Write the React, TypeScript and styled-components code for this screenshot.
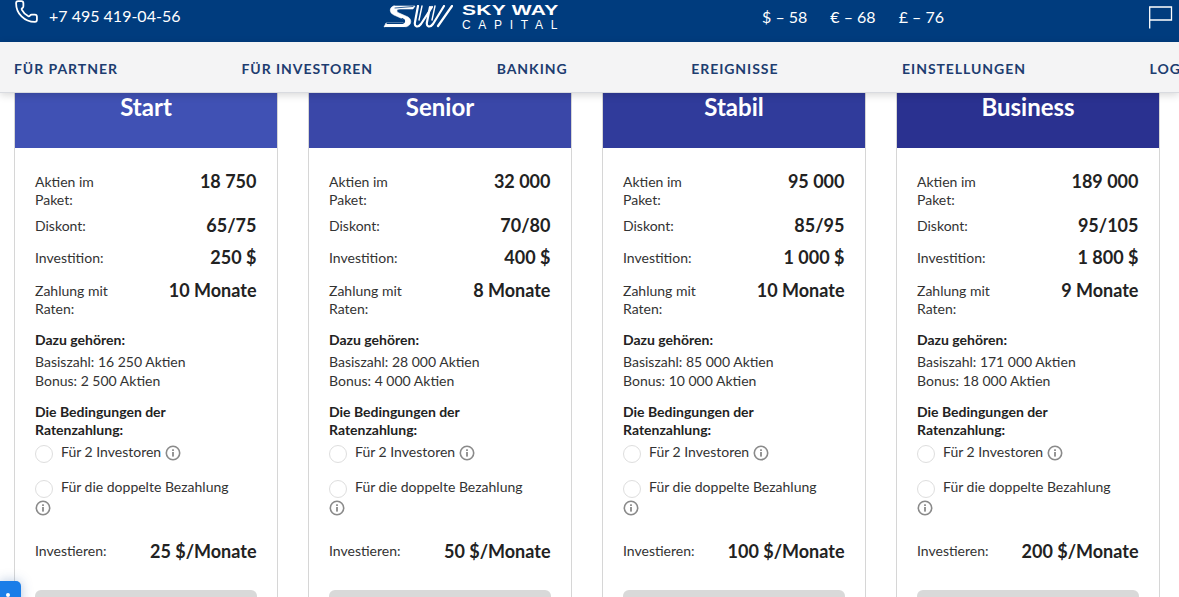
import styled, { createGlobalStyle } from "styled-components";
import { Phone } from "lucide-react";

interface Plan {
  title: string;
  headColor: string;
  shares: string;
  discount: string;
  investment: string;
  months: string;
  base: string;
  bonus: string;
  monthly: string;
}

const plans: Plan[] = [
  { title: "Start", headColor: "#4051b4", shares: "18 750", discount: "65/75", investment: "250 $", months: "10 Monate", base: "16 250", bonus: "2 500", monthly: "25 $/Monate" },
  { title: "Senior", headColor: "#3a47a8", shares: "32 000", discount: "70/80", investment: "400 $", months: "8 Monate", base: "28 000", bonus: "4 000", monthly: "50 $/Monate" },
  { title: "Stabil", headColor: "#303b9b", shares: "95 000", discount: "85/95", investment: "1 000 $", months: "10 Monate", base: "85 000", bonus: "10 000", monthly: "100 $/Monate" },
  { title: "Business", headColor: "#2a3190", shares: "189 000", discount: "95/105", investment: "1 800 $", months: "9 Monate", base: "171 000", bonus: "18 000", monthly: "200 $/Monate" },
];

const navItems = ["FÜR PARTNER", "FÜR INVESTOREN", "BANKING", "EREIGNISSE", "EINSTELLUNGEN", "LOGOUT"];

const GlobalStyle = createGlobalStyle`
  html, body {
    margin: 0;
    padding: 0;
    background: #fff;
    font-family: Lato, "Open Sans", sans-serif;
  }
  * {
    box-sizing: border-box;
  }
`;

const Page = styled.div`
  position: relative;
  width: 1179px;
  height: 597px;
  overflow: hidden;
`;

const TopBar = styled.header`
  display: flex;
  align-items: flex-start;
  height: 42px;
  background: #003c7e;
  color: #fff;
`;

const PhoneBox = styled.div`
  display: flex;
  align-items: center;
  gap: 10px;
  flex: none;
  width: 383px;
  height: 30px;
  padding-left: 14px;
  font-size: 16px;
`;

const PhoneIcon = styled.span`
  display: flex;
  margin-top: -8px;
`;

const Logo = styled.div`
  display: flex;
  align-items: flex-start;
  gap: 9px;
  flex: none;
  width: 379px;
  padding-top: 5px;
`;

const LogoText = styled.div`
  display: flex;
  flex-direction: column;
  gap: 4px;
  font-family: "Liberation Sans", sans-serif;
  color: #fff;
`;

const LogoTop = styled.span`
  font-size: 14px;
  font-weight: 700;
  line-height: 11px;
  letter-spacing: 0.2px;
  white-space: nowrap;
  transform: scaleX(1.5);
  transform-origin: left;
`;

const LogoBottom = styled.span`
  font-size: 12px;
  line-height: 10px;
  letter-spacing: 7.7px;
  white-space: nowrap;
`;

const Rates = styled.div`
  display: flex;
  gap: 23px;
  flex: none;
  width: 387px;
  height: 32px;
  align-items: center;
  font-size: 16px;
`;

const FlagIcon = styled.svg`
  width: 24px;
  height: 24px;
  margin-top: 6px;
  flex: none;
`;

const Nav = styled.nav`
  position: relative;
  z-index: 2;
  display: flex;
  gap: 123.6px;
  align-items: center;
  height: 51px;
  padding: 2px 0 0 14px;
  background: #f4f4f5;
  border-bottom: 1px solid #d9dbe0;
  box-shadow: 0 2px 8px rgba(0, 0, 0, 0.16);
  white-space: nowrap;
`;

const NavLink = styled.a`
  font-size: 14px;
  font-weight: 700;
  letter-spacing: 0.95px;
  color: #1d3d70;
`;

const Cards = styled.main`
  display: flex;
  gap: 30px;
  padding: 0 14px;
`;

const Card = styled.section`
  flex: none;
  width: 264px;
  height: 560px;
  border: 1px solid #d6d6d6;
  border-top: 0;
`;

const CardHead = styled.div<{ $color: string }>`
  height: 55px;
  background: ${(p) => p.$color};
  color: #fff;
  font-size: 24px;
  font-weight: 700;
  line-height: 27px;
  text-align: center;
`;

const CardBody = styled.div`
  padding: 24px 20px 0;
  color: #333;
  font-size: 14px;
  line-height: 18px;
`;

const Row = styled.div<{ $gap: number }>`
  display: flex;
  justify-content: space-between;
  align-items: flex-start;
  padding-right: 0.5px;
  margin-bottom: ${(p) => p.$gap}px;
`;

const Label = styled.div`
  width: 90px;
  padding-top: 1px;
`;

const Value = styled.div`
  color: #222;
  font-size: 18px;
  font-weight: 700;
  line-height: 18px;
  white-space: nowrap;
`;

const Heading = styled.div`
  color: #222;
  font-weight: 700;
`;

const IncludedBlock = styled.div`
  margin-top: 13px;
`;

const IncludedLine = styled.div`
  margin-top: 1px;
  &:nth-child(2) {
    margin-top: 4px;
  }
`;

const Terms = styled.div`
  margin-top: 13px;
  width: 190px;
`;

const Option = styled.label<{ $gap: number }>`
  display: block;
  width: 222px;
  margin-top: ${(p) => p.$gap}px;
`;

const Radio = styled.span`
  display: inline-block;
  width: 18px;
  height: 18px;
  margin-right: 8px;
  border: 1px solid #dedede;
  border-radius: 50%;
  vertical-align: -6px;
`;

const InfoIcon = styled.svg`
  display: inline-block;
  width: 16px;
  height: 16px;
  margin-left: 4px;
  vertical-align: -4px;
`;

const InfoBlock = styled(InfoIcon)`
  display: block;
  margin: 2px 0 0;
`;

const InvestRow = styled(Row)`
  align-items: center;
  margin-top: 25px;
`;

const BuyButton = styled.button`
  display: block;
  width: 222px;
  height: 40px;
  margin-top: 30px;
  border: 0;
  border-radius: 6px;
  background: #d9d9d9;
`;

const ChatWidget = styled.div`
  position: absolute;
  left: 0;
  top: 581px;
  z-index: 3;
  width: 21px;
  height: 30px;
  border-radius: 0 5px 5px 0;
  background: #1a7de8;
  box-shadow: 0 0 12px rgba(40, 90, 160, 0.35);
`;

const ChatDot = styled.span`
  position: absolute;
  left: 6px;
  top: 12px;
  width: 4px;
  height: 4px;
  border-radius: 50%;
  background: #fff;
`;

const Info = () => (
  <>
    <circle cx="8" cy="8" r="6.7" fill="none" stroke="#8a8a8a" strokeWidth="1.6" />
    <rect x="7.1" y="7" width="1.8" height="4.6" fill="#8a8a8a" />
    <rect x="7.1" y="4.3" width="1.8" height="1.7" fill="#8a8a8a" />
  </>
);

const SwLogo = () => (
  <svg width="70" height="24" viewBox="0 0 70 24" fill="none" stroke="#fff" strokeLinejoin="round" strokeLinecap="round">
    <path d="M11 1H32L30 4H17C13 4 13 7 16 8L25 12C30 15 28 22 21 22H1L3 18H19C23 18 23 15 20 14L11 10C6 8 6 2 11 1Z" fill="#fff" strokeWidth="0.6" />
    <path d="M2 22.5H22M12 3L30 1.5" stroke="#003c7e" strokeWidth="0.8" />
    <path d="M4 18.5H18C22 18.5 23 15 19 13.5" stroke="#003c7e" strokeWidth="1.1" />
    <path d="M35 1L32 17C31 22 35 23 38 19L49 2" strokeWidth="2.2" />
    <path d="M39 1L36 15" strokeWidth="1.4" />
    <path d="M47 2L44 17C43 22 47 23 50 19L61 1" strokeWidth="2.2" />
    <path d="M52 1L49 15" strokeWidth="1.4" />
    <path d="M69 1L55 21" strokeWidth="2.2" />
  </svg>
);

const PlanCard = ({ plan }: { plan: Plan }) => (
  <Card>
    <CardHead $color={plan.headColor}>{plan.title}</CardHead>
    <CardBody>
      <Row $gap={7}>
        <Label>Aktien im Paket:</Label>
        <Value>{plan.shares}</Value>
      </Row>
      <Row $gap={13}>
        <Label>Diskont:</Label>
        <Value>{plan.discount}</Value>
      </Row>
      <Row $gap={14}>
        <Label>Investition:</Label>
        <Value>{plan.investment}</Value>
      </Row>
      <Row $gap={0}>
        <Label>Zahlung mit Raten:</Label>
        <Value>{plan.months}</Value>
      </Row>
      <IncludedBlock>
        <Heading>Dazu gehören:</Heading>
        <IncludedLine>Basiszahl: {plan.base} Aktien</IncludedLine>
        <IncludedLine>Bonus: {plan.bonus} Aktien</IncludedLine>
      </IncludedBlock>
      <Terms>
        <Heading>Die Bedingungen der Ratenzahlung:</Heading>
      </Terms>
      <Option $gap={4}>
        <Radio />
        Für 2 Investoren
        <InfoIcon viewBox="0 0 16 16">
          <Info />
        </InfoIcon>
      </Option>
      <Option $gap={15}>
        <Radio />
        Für die doppelte Bezahlung
        <InfoBlock viewBox="0 0 16 16">
          <Info />
        </InfoBlock>
      </Option>
      <InvestRow $gap={0}>
        <Label>Investieren:</Label>
        <Value>{plan.monthly}</Value>
      </InvestRow>
      <BuyButton />
    </CardBody>
  </Card>
);

const App = () => {
  return (
    <Page>
      <GlobalStyle />
      <TopBar>
        <PhoneBox>
          <PhoneIcon>
            <Phone size={25} strokeWidth={1.7} />
          </PhoneIcon>
          +7 495 419-04-56
        </PhoneBox>
        <Logo>
          <SwLogo />
          <LogoText>
            <LogoTop>SKY WAY</LogoTop>
            <LogoBottom>CAPITAL</LogoBottom>
          </LogoText>
        </Logo>
        <Rates>
          <span>$ – 58</span>
          <span>€ – 68</span>
          <span>£ – 76</span>
        </Rates>
        <FlagIcon viewBox="0 0 24 24" fill="none" stroke="#fff" strokeWidth="1.3">
          <path d="M0.7 22.5V1H22.5V14H0.7" />
        </FlagIcon>
      </TopBar>
      <Nav>
        {navItems.map((item) => (
          <NavLink key={item}>{item}</NavLink>
        ))}
      </Nav>
      <Cards>
        {plans.map((plan) => (
          <PlanCard key={plan.title} plan={plan} />
        ))}
      </Cards>
      <ChatWidget>
        <ChatDot />
      </ChatWidget>
    </Page>
  );
};

export default App;
